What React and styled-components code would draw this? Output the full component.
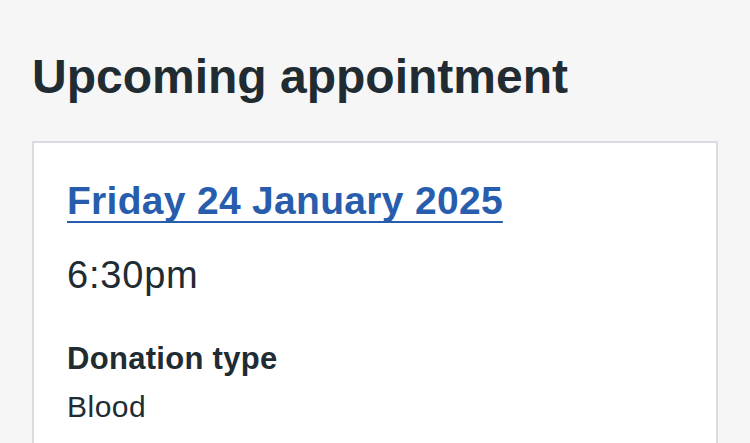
import React from 'react';
import styled, { createGlobalStyle } from 'styled-components';

const GlobalStyle = createGlobalStyle`
    body {
        margin: 0;
        background: #f6f6f6;
        font-family: 'Liberation Sans', Arial, sans-serif;
        color: #212b32;
    }
`;

export default function App(){
    return(
        <>
        <GlobalStyle/>
        <Page>
            <Title>Upcoming appointment</Title>
            <Card>
                <DateLink href="#">Friday 24 January 2025</DateLink>
                <Time>6:30pm</Time>
                <Label>Donation type</Label>
                <Value>Blood</Value>
            </Card>
        </Page>
        </>
    );
}

const Page = styled.div`
    padding: 49px 32px 0 32px;
`;

const Title = styled.h1`
    margin: 0 0 36px 0;
    font-size: 48px;
    line-height: 56px;
    font-weight: 700;
    color: #212b32;
`;

const Card = styled.div`
    background: #ffffff;
    border: 2px solid #dadce2;
    padding: 36px 33px 60px 33px;
    display: flex;
    flex-direction: column;
    align-items: flex-start;
`;

const DateLink = styled.a`
    font-size: 39px;
    line-height: 44px;
    font-weight: 700;
    letter-spacing: 0.3px;
    color: #285dad;
    text-decoration: underline;
    text-decoration-thickness: 2px;
    text-underline-offset: 7px;
    text-decoration-skip-ink: none;
`;

const Time = styled.p`
    margin: 30px 0 0 0;
    font-size: 38px;
    line-height: 44px;
    letter-spacing: 0.8px;
`;

const Label = styled.h3`
    margin: 44px 0 0 0;
    font-size: 31px;
    line-height: 36px;
    font-weight: 700;
    letter-spacing: 0.3px;
`;

const Value = styled.p`
    margin: 12px 0 0 0;
    font-size: 30px;
    line-height: 36px;
    letter-spacing: 0.5px;
`;
